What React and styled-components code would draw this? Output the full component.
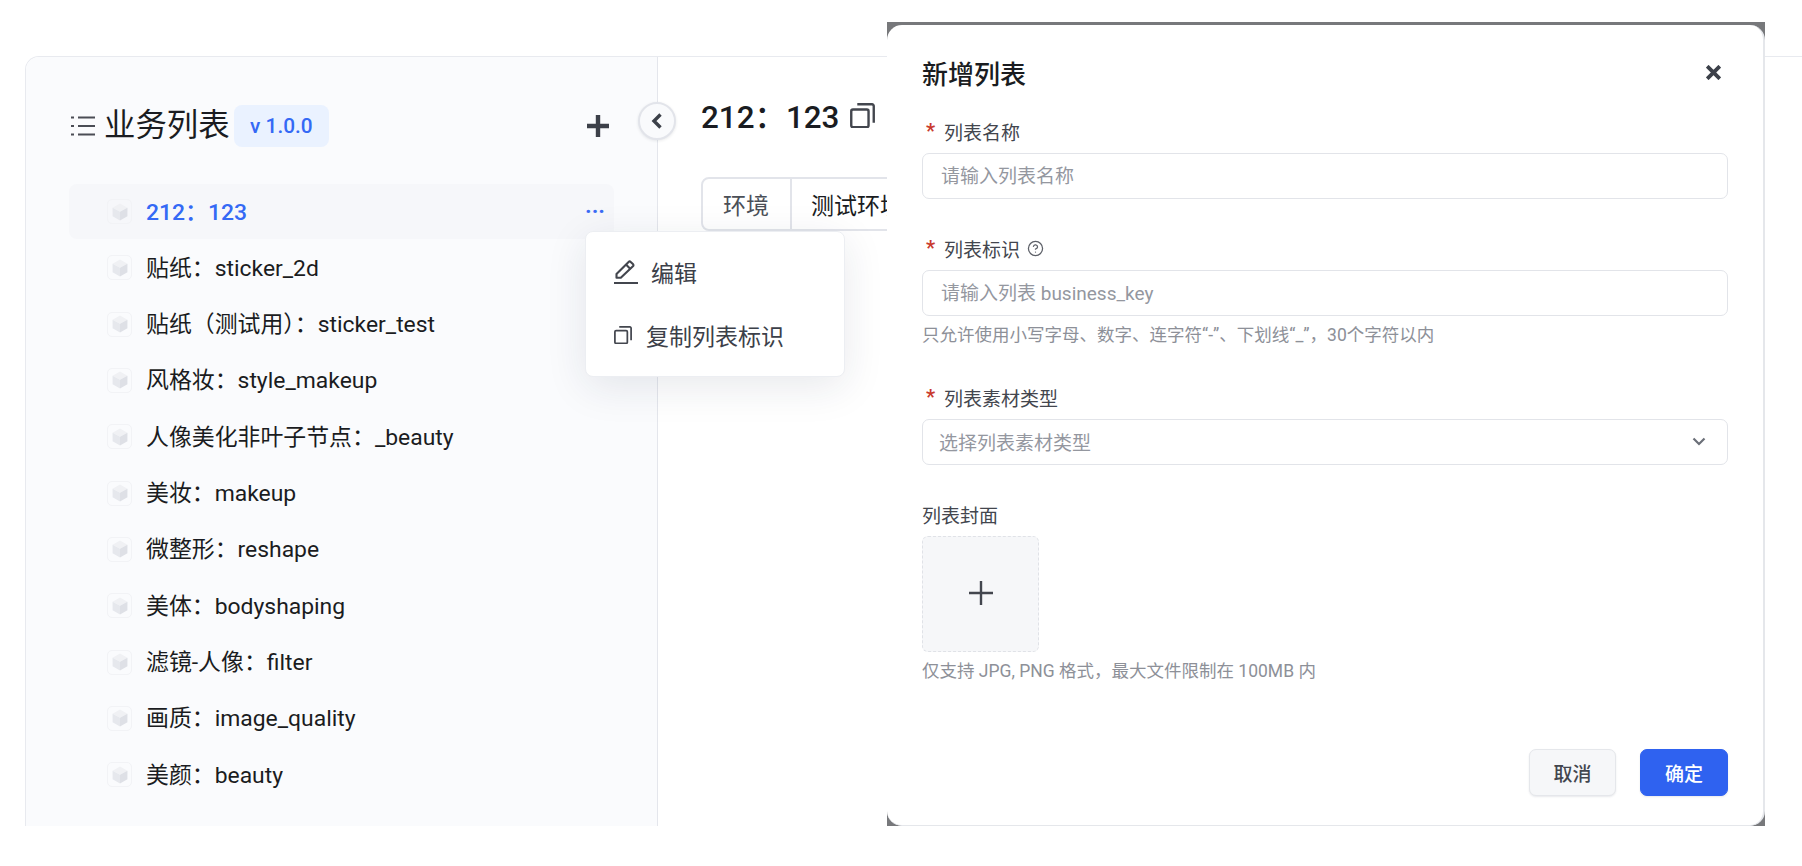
import styled, { createGlobalStyle } from "styled-components";
import { CircleHelp } from "lucide-react";

const GlobalStyle = createGlobalStyle`
    html, body {
        margin: 0;
        padding: 0;
        background: #ffffff;
    }

    * {
        box-sizing: border-box;
    }

    body {
        font-family: Roboto, "Noto Sans CJK SC", sans-serif;
    }
`;

const lista = [
    "212：123",
    "贴纸：sticker_2d",
    "贴纸（测试用）：sticker_test",
    "风格妆：style_makeup",
    "人像美化非叶子节点：_beauty",
    "美妆：makeup",
    "微整形：reshape",
    "美体：bodyshaping",
    "滤镜-人像：filter",
    "画质：image_quality",
    "美颜：beauty",
];

function ListIcon() {
    return (
        <svg width="24" height="22" viewBox="0 0 24 22" fill="none" stroke="#4a4d55" strokeWidth="1.8">
            <path d="M0 2.5h3M7 2.5h17M0 11h3M7 11h17M0 19.5h3M7 19.5h17" />
        </svg>
    );
}

function PlusIcon() {
    return (
        <svg width="22" height="22" viewBox="0 0 22 22" fill="none" stroke="#3c4049" strokeWidth="4.4">
            <path d="M11 0v22M0 11h22" />
        </svg>
    );
}

function CubeIcon() {
    return (
        <svg width="16" height="18" viewBox="0 0 15 17">
            <path d="M7.5 0.5 14.5 4.4 7.5 8.3 0.5 4.4z" fill="#f0f1f4" />
            <path d="M0.5 4.4 7.5 8.3V16.5L0.5 12.6z" fill="#e6e8ed" />
            <path d="M14.5 4.4 7.5 8.3V16.5L14.5 12.6z" fill="#dee0e6" />
        </svg>
    );
}

function CopyIcon({ size }) {
    return (
        <svg width={size} height={size} viewBox="0 0 24 24" fill="none" stroke="#43464e" strokeWidth="2.3">
            <rect x="1.2" y="6.2" width="16.6" height="17" rx="1.6" />
            <path d="M7 1.2h14.2a1.6 1.6 0 0 1 1.6 1.6V19" />
        </svg>
    );
}

function EditIcon() {
    return (
        <svg width="24" height="24" viewBox="0 0 24 24" fill="none" stroke="#43464e" strokeWidth="2.1">
            <path d="M2.5 17.8V14L14.6 1.9a1.5 1.5 0 0 1 2.1 0l2.2 2.2a1.5 1.5 0 0 1 0 2.1L6.8 17.8z" strokeLinejoin="round" />
            <path d="M12 4.6 16.4 9" />
            <path d="M0 23h24" strokeWidth="2" />
        </svg>
    );
}

function ChevronLeft() {
    return (
        <svg width="12" height="16" viewBox="0 0 12 16" fill="none" stroke="#3c4049" strokeWidth="3.4">
            <path d="M9.5 1.5 3 8l6.5 6.5" />
        </svg>
    );
}

function ChevronDown() {
    return (
        <svg width="14" height="9" viewBox="0 0 14 9" fill="none" stroke="#6b6f78" strokeWidth="2.2">
            <path d="M1.5 1.5 7 7l5.5-5.5" />
        </svg>
    );
}

function CloseIcon() {
    return (
        <svg width="15" height="15" viewBox="0 0 15 15" fill="none" stroke="#3c4049" strokeWidth="3.8">
            <path d="M1.2 1.2 13.8 13.8M13.8 1.2 1.2 13.8" />
        </svg>
    );
}

function ThinPlus() {
    return (
        <svg width="24" height="24" viewBox="0 0 24 24" fill="none" stroke="#43464e" strokeWidth="2.4">
            <path d="M12 0v24M0 12h24" />
        </svg>
    );
}

export default function App() {
    return (
        <Page>
            <GlobalStyle />
            <Shell>
                <Sidebar>
                    <SideHead>
                        <ListIcon />
                        <SideTitle>业务列表</SideTitle>
                        <Version>v 1.0.0</Version>
                        <AddButton><PlusIcon /></AddButton>
                    </SideHead>
                    <Rows>
                        {lista.map((item, i) => (
                            <Row key={item} $active={i === 0}>
                                <CubeTile><CubeIcon /></CubeTile>
                                <RowText>{item}</RowText>
                                {i === 0 && <MoreDots>···</MoreDots>}
                            </Row>
                        ))}
                    </Rows>
                    <Collapse><ChevronLeft /></Collapse>
                    <Menu>
                        <MenuItem>
                            <EditIcon />
                            <span>编辑</span>
                        </MenuItem>
                        <MenuItem $tight>
                            <CopyIcon size={18} />
                            <span>复制列表标识</span>
                        </MenuItem>
                    </Menu>
                </Sidebar>
                <Main>
                    <MainTitle>
                        <h1>212：123</h1>
                        <CopyIcon size={25} />
                    </MainTitle>
                    <InfoTable>
                        <InfoKey>环境</InfoKey>
                        <InfoValue>测试环境</InfoValue>
                    </InfoTable>
                </Main>
            </Shell>

            <Backdrop>
                <Modal>
                    <ModalHead>
                        <h2>新增列表</h2>
                        <CloseIcon />
                    </ModalHead>

                    <Field $gap={38}>
                        <Label><Star>*</Star>列表名称</Label>
                        <Input>请输入列表名称</Input>
                    </Field>

                    <Field $gap={40}>
                        <Label>
                            <Star>*</Star>列表标识
                            <CircleHelp size={17} color="#5d6068" strokeWidth={1.8} />
                        </Label>
                        <Input>请输入列表 business_key</Input>
                        <Hint>只允许使用小写字母、数字、连字符“-”、下划线“_”，30个字符以内</Hint>
                    </Field>

                    <Field $gap={38}>
                        <Label><Star>*</Star>列表素材类型</Label>
                        <Select>
                            <span>选择列表素材类型</span>
                            <ChevronDown />
                        </Select>
                    </Field>

                    <Field $gap={0}>
                        <Label>列表封面</Label>
                        <Upload><ThinPlus /></Upload>
                        <Hint>仅支持 JPG, PNG 格式，最大文件限制在 100MB 内</Hint>
                    </Field>

                    <Footer>
                        <CancelButton>取消</CancelButton>
                        <ConfirmButton>确定</ConfirmButton>
                    </Footer>
                </Modal>
            </Backdrop>
        </Page>
    );
}

const Page = styled.div`
    position: relative;
    width: 1802px;
    height: 826px;
    padding: 56px 0 0 25px;
    overflow: hidden;
    background: #ffffff;
`;

const Shell = styled.div`
    display: flex;
    height: 100%;
    border-top: 1px solid #e8eaef;
    border-left: 1px solid #e8eaef;
    border-top-left-radius: 14px;
    overflow: hidden;
`;

const Sidebar = styled.aside`
    position: relative;
    flex: 0 0 632px;
    padding: 0 43px;
    background: #fafbfd;
    border-right: 1px solid #e4e6ec;
`;

const SideHead = styled.div`
    display: flex;
    align-items: center;
    height: 42px;
    margin: 48px 5px 37px 2px;
`;

const SideTitle = styled.div`
    margin-left: 9px;
    font-size: 31.4px;
    line-height: 42px;
    font-weight: 400;
    color: #1a1c21;
`;

const Version = styled.div`
    display: flex;
    align-items: center;
    height: 42px;
    margin-left: 4px;
    padding: 0 16.5px;
    border-radius: 8px;
    background: #eaf2ff;
    color: #3469f5;
    font-size: 20.8px;
    font-weight: 500;
`;

const AddButton = styled.div`
    display: flex;
    margin-left: auto;
`;

const Rows = styled.div`
    display: flex;
    flex-direction: column;
    gap: 1.33px;
`;

const Row = styled.div`
    display: flex;
    align-items: center;
    height: 55px;
    padding: 0 9px 0 38px;
    border-radius: 8px;
    background: ${(props) => (props.$active ? "#f6f7fa" : "transparent")};
    color: ${(props) => (props.$active ? "#3469f5" : "#1a1c21")};
    font-size: 22.9px;
    font-weight: ${(props) => (props.$active ? 500 : 400)};
    white-space: nowrap;
`;

const RowText = styled.span`
    padding-bottom: 4px;
`;

const CubeTile = styled.div`
    display: flex;
    align-items: center;
    justify-content: center;
    width: 25px;
    height: 25px;
    margin-right: 14px;
    border: 1px solid #f2f3f6;
    border-radius: 5px;
`;

const MoreDots = styled.div`
    margin-left: auto;
    color: #3a6cf5;
    font-size: 22px;
    font-weight: 700;
    letter-spacing: 0;
`;

const Collapse = styled.div`
    position: absolute;
    top: 45px;
    right: -19px;
    z-index: 2;
    display: flex;
    align-items: center;
    justify-content: center;
    width: 38px;
    height: 38px;
    border: 2px solid #e2e4ea;
    border-radius: 50%;
    background: #f9fafc;
    box-shadow: 0 1px 3px rgba(30, 35, 50, 0.1);
`;

const Menu = styled.div`
    position: absolute;
    top: 174px;
    left: 559px;
    z-index: 3;
    display: flex;
    flex-direction: column;
    width: 260px;
    height: 146px;
    padding: 8px 0 0 28px;
    border: 1px solid #eceef2;
    border-radius: 8px;
    background: #ffffff;
    box-shadow: 0 10px 40px rgba(30, 40, 70, 0.1);
`;

const MenuItem = styled.div`
    display: flex;
    align-items: center;
    gap: ${(props) => (props.$tight ? "14px" : "13px")};
    height: 63px;
    color: #3c4049;
    font-size: 23px;
`;

const Main = styled.main`
    flex: 1;
    padding: 38px 0 0 43px;
    background: #ffffff;
`;

const MainTitle = styled.div`
    display: flex;
    align-items: center;
    gap: 11px;
    height: 38px;

    svg {
        margin-top: 2px;
    }

    h1 {
        margin: 0;
        font-size: 31.4px;
        font-weight: 500;
        color: #1a1c21;
    }
`;

const InfoTable = styled.div`
    display: flex;
    width: 600px;
    height: 54px;
    margin-top: 44px;
    border: 2px solid #e2e4ea;
    border-radius: 8px;
    font-size: 23px;
    align-items: center;
`;

const InfoKey = styled.div`
    display: flex;
    align-items: center;
    width: 89px;
    height: 100%;
    padding-left: 20px;
    border-right: 2px solid #e2e4ea;
    color: #4b4f57;
`;

const InfoValue = styled.div`
    padding-left: 19px;
    color: #1a1c21;
`;

const Backdrop = styled.div`
    position: absolute;
    top: 22px;
    left: 887px;
    z-index: 5;
    width: 878px;
    height: 804px;
    padding-top: 3px;
    background: #77787b;
`;

const Modal = styled.div`
    display: flex;
    flex-direction: column;
    height: 100%;
    padding: 0 35px 0 35px;
    border-right: 2px solid #e5e7eb;
    border-bottom: 1px solid #e5e7eb;
    border-radius: 15px;
    background: #ffffff;
`;

const ModalHead = styled.div`
    display: flex;
    align-items: center;
    justify-content: space-between;
    height: 36px;
    margin: 29px 7px 30px 0;

    h2 {
        margin: 0;
        font-size: 26px;
        font-weight: 500;
        color: #1a1c21;
    }
`;

const Field = styled.div`
    display: flex;
    flex-direction: column;
    margin-bottom: ${(props) => props.$gap}px;
`;

const Label = styled.label`
    display: flex;
    align-items: center;
    height: 24px;
    margin-bottom: 9px;
    padding-bottom: 2px;
    color: #43464e;
    font-size: 19px;

    svg {
        margin-left: 7px;
    }
`;

const Star = styled.span`
    width: 22px;
    padding-left: 4px;
    color: #c93a2e;
    font-size: 20px;
    font-weight: 700;
    line-height: 20px;
`;

const Input = styled.div`
    display: flex;
    align-items: center;
    height: 46px;
    padding: 0 0 3px 18px;
    border: 1.5px solid #e2e4e9;
    border-radius: 7px;
    color: #94979f;
    font-size: 19px;
`;

const Select = styled(Input)`
    justify-content: space-between;
    padding: 0 21px 2px 16px;
`;

const Hint = styled.div`
    margin-top: 8px;
    color: #8d9098;
    font-size: 17.5px;
    line-height: 22px;
`;

const Upload = styled.div`
    display: flex;
    align-items: center;
    justify-content: center;
    width: 117px;
    height: 116px;
    padding-bottom: 3px;
    border: 1.5px dashed #e0e2e7;
    border-radius: 6px;
    background: #f6f7f9;
`;

const Footer = styled.div`
    display: flex;
    justify-content: flex-end;
    gap: 24px;
    margin-top: auto;
    margin-bottom: 29px;
`;

const CancelButton = styled.div`
    display: flex;
    align-items: center;
    justify-content: center;
    width: 87px;
    height: 47px;
    border: 1.5px solid #e5e7eb;
    border-radius: 7px;
    background: #f6f7f9;
    box-shadow: 0 1px 2px rgba(30, 40, 70, 0.1);
    color: #43464e;
    font-size: 19px;
    font-weight: 500;
`;

const ConfirmButton = styled(CancelButton)`
    width: 88px;
    border-color: #2f62f0;
    background: #2f62f0;
    color: #ffffff;
`;
